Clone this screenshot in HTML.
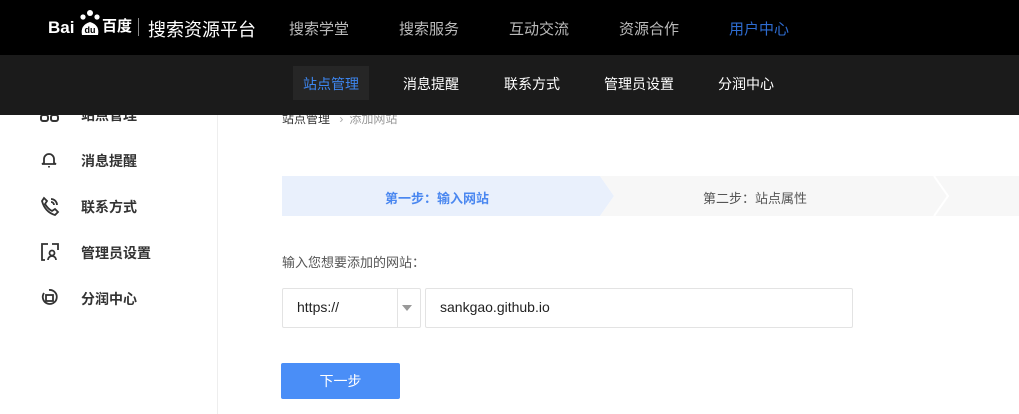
<!DOCTYPE html><html><head><meta charset="utf-8"><style>
*{margin:0;padding:0;box-sizing:border-box}
body{width:1019px;height:414px;overflow:hidden;background:#fff;font-family:"Liberation Sans","Noto Sans CJK SC",sans-serif;position:relative}
.a{position:absolute;white-space:nowrap}
</style></head><body>
<div class="a" style="left:217px;top:115px;width:1px;height:299px;background:#eee"></div>
<!-- sidebar -->
<div class="a" style="left:81px;top:105px;font-size:14px;font-weight:bold;color:#333">站点管理</div>
<svg class="a" style="left:40px;top:104px" width="20" height="20" viewBox="0 0 20 20" fill="none" stroke="#333" stroke-width="2"><rect x="6" y="1" width="7" height="6" rx="2"/><rect x="1" y="11" width="7" height="6" rx="2"/><rect x="11" y="11" width="7" height="6" rx="2"/></svg>
<div class="a" style="left:81px;top:151px;font-size:14px;font-weight:bold;color:#333">消息提醒</div>
<svg class="a" style="left:40px;top:150px" width="20" height="20" viewBox="0 0 20 20" fill="none" stroke="#333" stroke-width="1.8"><path d="M4 13 V9 a5 5 0 0 1 10 0 V13 L16 14 H2 Z"/><path d="M9 16 v1.5"/></svg>
<div class="a" style="left:81px;top:197px;font-size:14px;font-weight:bold;color:#333">联系方式</div>
<svg class="a" style="left:40px;top:196px" width="20" height="20" viewBox="0 0 20 20" fill="none" stroke="#333" stroke-width="1.8"><path d="M4 2 L7 5 L5 8 Q8 13 12 15 L15 13 L18 16 L15 19 Q5 16 2 5 Z"/><path d="M11 3 a6 6 0 0 1 6 6 M11 6 a3 3 0 0 1 3 3"/></svg>
<div class="a" style="left:81px;top:243px;font-size:14px;font-weight:bold;color:#333">管理员设置</div>
<svg class="a" style="left:40px;top:242px" width="20" height="20" viewBox="0 0 20 20" fill="none" stroke="#333" stroke-width="1.8"><path d="M8 2 H2 V18 H5 M18 8 V2 H12"/><circle cx="12" cy="11" r="2.5"/><path d="M8 18 a4 4 0 0 1 8 0"/></svg>
<div class="a" style="left:81px;top:289px;font-size:14px;font-weight:bold;color:#333">分润中心</div>
<svg class="a" style="left:40px;top:288px" width="20" height="20" viewBox="0 0 20 20" fill="none" stroke="#333" stroke-width="1.8"><path d="M4 5 a7 7 0 1 0 5 -3"/><rect x="6" y="7" width="7" height="6"/></svg>
<!-- breadcrumb -->
<div class="a" style="left:282px;top:110px;font-size:12px;color:#333">站点管理 <span style="color:#aaa;margin:0 6px">›</span><span style="color:#999">添加网站</span></div>
<!-- steps -->
<svg class="a" style="left:282px;top:176px" width="737" height="40"><polygon points="0,0 318,0 332,20 318,40 0,40" fill="#e9f0fc"/><polygon points="318,0 652,0 666,20 652,40 318,40 332,20" fill="#f7f7f7"/><polygon points="652,0 737,0 737,40 652,40 666,20" fill="#f7f7f7"/><polyline points="652,0 666,20 652,40" stroke="#fff" stroke-width="2" fill="none"/></svg>
<div class="a" style="left:385px;top:188px;font-size:13px;font-weight:bold;color:#4a87f0">第一步：输入网站</div>
<div class="a" style="left:703px;top:188px;font-size:13px;color:#555">第二步：站点属性</div>
<div class="a" style="left:282px;top:252px;font-size:13px;color:#555">输入您想要添加的网站：</div>
<div class="a" style="left:282px;top:288px;width:139px;height:40px;border:1px solid #e3e3e3;border-radius:2px"></div>
<div class="a" style="left:397px;top:288px;width:1px;height:40px;background:#e3e3e3"></div>
<div class="a" style="left:297px;top:299px;font-size:14px;color:#222">https://</div>
<div class="a" style="left:402px;top:305px;width:0;height:0;border-left:5px solid transparent;border-right:5px solid transparent;border-top:6px solid #999"></div>
<div class="a" style="left:425px;top:288px;width:428px;height:40px;border:1px solid #e3e3e3;border-radius:2px"></div>
<div class="a" style="left:440px;top:299px;font-size:14px;color:#222">sankgao.github.io</div>
<div class="a" style="left:281px;top:363px;width:119px;height:36px;background:#4a8ef7;border-radius:2px;color:#fff;font-size:14px;text-align:center;line-height:36px">下一步</div>
<!-- header -->
<div class="a" style="left:0;top:0;width:1019px;height:55px;background:#000"></div>
<div class="a" style="left:0;top:55px;width:1019px;height:60px;background:#1b1b1b"></div>
<div class="a" style="left:48px;top:18px;font-size:17px;font-weight:bold;color:#fff;line-height:20px">Bai</div>
<div class="a" style="left:102px;top:17px;font-size:15px;font-weight:bold;color:#fff;line-height:20px">百度</div>
<svg class="a" style="left:78px;top:9px" width="24" height="27"><circle cx="12" cy="4" r="3" fill="#fff"/><circle cx="5" cy="8" r="2.6" fill="#fff"/><circle cx="19" cy="8" r="2.6" fill="#fff"/><path d="M4 26 Q2 16 12 13 Q22 16 20 26 Z" fill="#fff"/><text x="12" y="24" font-size="9" font-weight="bold" fill="#000" text-anchor="middle" font-family="Liberation Sans">du</text></svg>
<div class="a" style="left:138px;top:18px;width:1px;height:18px;background:#888"></div>
<div class="a" style="left:148px;top:16px;font-size:18px;color:#fff">搜索资源平台</div>
<div class="a" style="left:289px;top:18px;font-size:15px;color:#bbb">搜索学堂</div>
<div class="a" style="left:399px;top:18px;font-size:15px;color:#bbb">搜索服务</div>
<div class="a" style="left:509px;top:18px;font-size:15px;color:#bbb">互动交流</div>
<div class="a" style="left:619px;top:18px;font-size:15px;color:#bbb">资源合作</div>
<div class="a" style="left:729px;top:18px;font-size:15px;color:#2e6cd0">用户中心</div>
<div class="a" style="left:293px;top:66px;width:76px;height:34px;background:#262626"></div>
<div class="a" style="left:303px;top:74px;font-size:14px;color:#3d86f0">站点管理</div>
<div class="a" style="left:403px;top:74px;font-size:14px;color:#fff">消息提醒</div>
<div class="a" style="left:504px;top:74px;font-size:14px;color:#fff">联系方式</div>
<div class="a" style="left:604px;top:74px;font-size:14px;color:#fff">管理员设置</div>
<div class="a" style="left:718px;top:74px;font-size:14px;color:#fff">分润中心</div>
</body></html>
